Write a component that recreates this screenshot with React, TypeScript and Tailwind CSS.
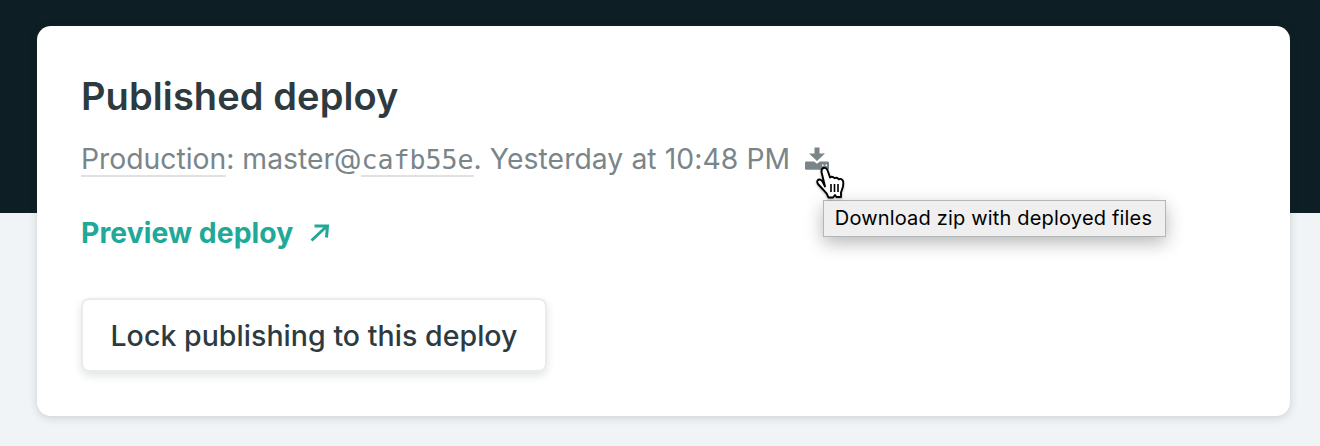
export default function App() {
  return (
    <main className="flex h-[446px] w-[1320px] flex-col overflow-hidden bg-[linear-gradient(#0e1e25_213.500px,#f0f4f7_213.500px)] px-[37px] pt-[26px] font-['Inter',sans-serif]">
      <section className="flex h-[390px] w-[1253px] flex-col items-start rounded-[14px] bg-white pl-[44px] shadow-[0_2px_8px_rgba(14,30,37,0.16)]">
        <h1 className="mt-[47px] whitespace-nowrap text-[38px] leading-[46px] font-semibold tracking-[0.1px] text-[#2d3b41]">
          Published deploy
        </h1>
        <p className="mt-[18px] flex h-[44px] items-center whitespace-nowrap text-[28.3px] leading-[36px] text-[#7a8589]">
          <span className="h-9 border-b-2 border-[#dfe2e4]">Production</span>
          <span className="h-9">: master@</span>
          <span className="h-9 border-b-2 border-[#dfe2e4] font-['DejaVu_Sans_Mono',monospace] text-[26.6px] leading-[38px]">cafb55e</span>
          <span className="h-9 tracking-[0.08px]">. Yesterday at 10:48 PM</span>
          <span className="relative ml-[15px] block h-6 w-6">
            <svg viewBox="0 0 24 24" className="h-6 w-6" fill="#7a8589">
              <path d="M9.500 0.500h5v6h5.500L12 14 4 6.500h5.500z" />
              <path d="M1.300 14.500H9l3 2.200 3-2.200h7.700A1.300 1.300 0 0 1 24 15.800v5.700a1.300 1.300 0 0 1-1.300 1.300H1.300A1.300 1.300 0 0 1 0 21.500v-5.700A1.300 1.300 0 0 1 1.300 14.500z" />
              <path d="M17 17.500h1.500v1.500H17zM20.500 17.500H22v1.500h-1.500z" fill="#fff" />
            </svg>
            <span className="absolute top-[53px] left-[17.500px] flex h-[37px] w-[343px] items-center border border-[#b3b6b7] bg-[#efefef] pb-[2px] pl-[11px] text-[20px] tracking-[0.18px] text-black shadow-[0_6px_18px_rgba(0,0,0,0.28)]">
              Download zip with deployed files
            </span>
            <svg viewBox="0 0 30 34" className="absolute top-[19px] left-[10px] h-[34px] w-[31px] drop-shadow-[0_1px_1px_rgba(0,0,0,0.3)]">
              <path
                d="M9.500 20.500 6.500 8Q5 3 8 2q3-.8 4.300 3l2.200 6.500q2-1.800 4.500.7 2.500-1.500 4.200 1.100 3-1.300 4.300 1.700.8 2 0 5.500l-2 6V31h-4.500l-1.500-2-2 2.500h-4.500Q12 27.500 8 24L2.500 18q-2-3.500 1-4.500 2-.4 3.500 2z"
                fill="#fff"
                stroke="#000"
                strokeWidth="1.900"
                strokeLinejoin="round"
              />
              <path d="M15.500 18v8M19 18v8M22.500 18v8" stroke="#000" strokeWidth="1.600" />
            </svg>
          </span>
        </p>
        <a className="mt-[35px] flex items-center whitespace-nowrap text-[28.3px] leading-[34px] font-[650] tracking-[0.06px] text-[#20a898]">
          Preview deploy
          <svg viewBox="0 0 20 20" className="ml-[17px] h-5 w-5" fill="none" stroke="currentColor" strokeWidth="3">
            <path d="M1.500 17.500 16.500 3.500M4.500 3h13L16.500 14.500" />
          </svg>
        </a>
        <button className="mt-[48px] h-[74px] w-[466px] rounded-[8px] border-2 border-[#e9ebed] pt-[2px] text-[28.5px] font-medium tracking-[0.05px] text-[#2d3b41] shadow-[0_4px_8px_rgba(14,30,37,0.12)]">
          Lock publishing to this deploy
        </button>
      </section>
    </main>
  );
}
